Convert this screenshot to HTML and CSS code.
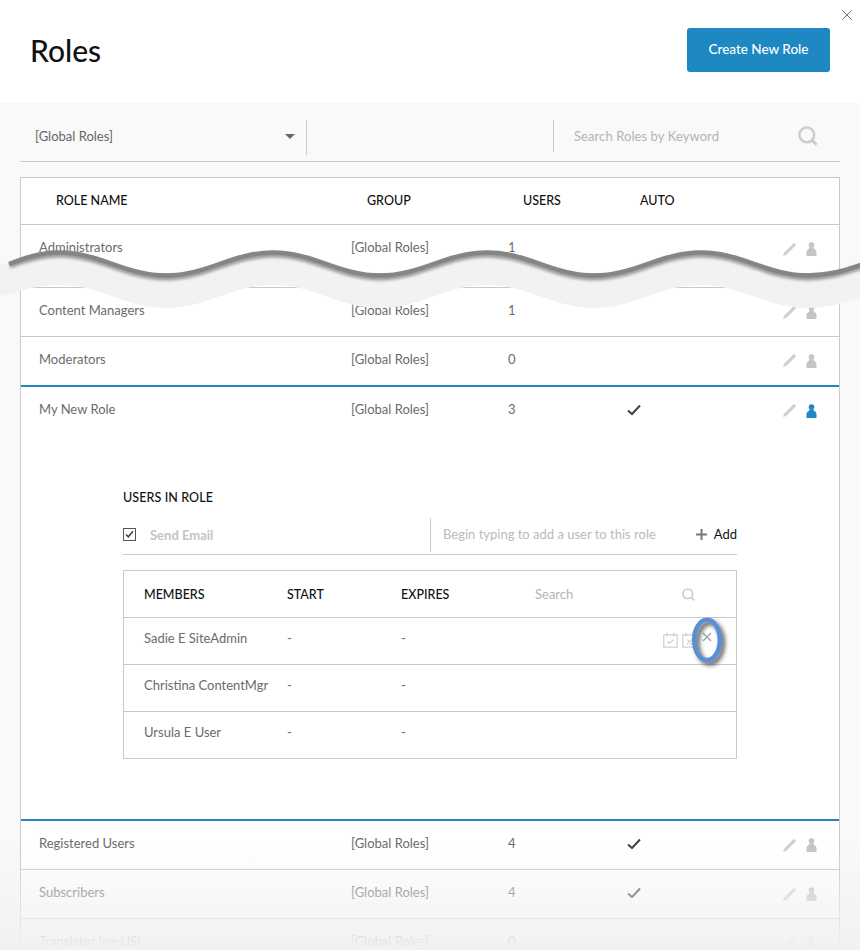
FILE: index.html
```html
<!DOCTYPE html>
<html lang="en">
<head>
<meta charset="utf-8">
<title>Roles</title>
<link rel="stylesheet" href="styles.css">
</head>
<body>
<svg class="defs" width="0" height="0" aria-hidden="true">
  <symbol id="i-pencil" viewBox="0 0 15 15"><path d="M12 .8 14.2 3 4.2 13 1 14.1 2 10.8Z"/></symbol>
  <symbol id="i-person" viewBox="0 0 11 14"><circle cx="5.5" cy="3" r="2.8"/><path d="M3.6 5.2h3.8c.5 1.4 1.2 2 2.3 2.9.6.6.8 1.2.8 2V14H.5v-3.9c0-.8.2-1.4.8-2 1.1-.9 1.8-1.5 2.3-2.9Z"/></symbol>
  <symbol id="i-check" viewBox="0 0 14 12"><path d="M1 6.5 5 10 13 1.5" fill="none" stroke="currentColor" stroke-width="2"/></symbol>
  <symbol id="i-search" viewBox="0 0 20 20"><circle cx="8.8" cy="8.8" r="7.4" fill="none" stroke="currentColor" stroke-width="2.4"/><path d="M13.8 14 18.6 18.8" fill="none" stroke="currentColor" stroke-width="3"/></symbol>
</svg>

<header class="top">
  <h1 class="title">Roles</h1>
  <button class="primary">Create New Role</button>
  <svg class="close" viewBox="0 0 11 11"><path d="M.5.5l10 10M10.5.5l-10 10"/></svg>
</header>

<main class="content">
  <div class="toolbar">
    <div class="select"><span>[Global Roles]</span><i class="caret"></i></div>
    <div class="toolbar-mid"></div>
    <div class="keyword"><span>Search Roles by Keyword</span><svg class="search-lg"><use href="#i-search"/></svg></div>
  </div>

  <section class="table">
    <div class="thead"><span>ROLE NAME</span><span>GROUP</span><span>USERS</span><span>AUTO</span></div>

    <div class="row"><span>Administrators</span><span>[Global Roles]</span><span>1</span><span></span>
      <span class="acts"><svg class="pencil"><use href="#i-pencil"/></svg><svg class="person"><use href="#i-person"/></svg></span></div>
    <div class="cut"></div>
    <div class="row"><span>Content Managers</span><span>[Global Roles]</span><span>1</span><span></span>
      <span class="acts"><svg class="pencil"><use href="#i-pencil"/></svg><svg class="person"><use href="#i-person"/></svg></span></div>
    <div class="row row-flush"><span>Moderators</span><span>[Global Roles]</span><span>0</span><span></span>
      <span class="acts"><svg class="pencil"><use href="#i-pencil"/></svg><svg class="person"><use href="#i-person"/></svg></span></div>

    <div class="open">
      <div class="row row-flush"><span>My New Role</span><span>[Global Roles]</span><span>3</span><span><svg class="check"><use href="#i-check"/></svg></span>
        <span class="acts"><svg class="pencil"><use href="#i-pencil"/></svg><svg class="person active"><use href="#i-person"/></svg></span></div>
      <div class="panel">
        <h2 class="panel-title">USERS IN ROLE</h2>
        <div class="addbar">
          <span class="checkbox"><svg viewBox="0 0 14 12"><path d="M2.5 6 5.5 9 11.5 2" fill="none" stroke="#444" stroke-width="2"/></svg></span>
          <span class="send">Send Email</span>
          <span class="typeahead">Begin typing to add a user to this role</span>
          <span class="add"><svg viewBox="0 0 11 11"><path d="M5.5 0v11M0 5.5h11"/></svg>Add</span>
        </div>
        <div class="members">
          <div class="mhead"><span>MEMBERS</span><span>START</span><span>EXPIRES</span><span class="msearch">Search</span><svg class="search-sm"><use href="#i-search"/></svg></div>
          <div class="mrow"><span>Sadie E SiteAdmin</span><span>-</span><span>-</span>
            <span class="macts">
              <svg class="cal" viewBox="0 0 15 16"><path d="M.8 2.8h13.4v12.4H.8zM4 .5v4M11 .5v4M4.5 9.5l2 2 4-4"/></svg>
              <svg class="cal" viewBox="0 0 15 16"><path d="M.8 2.8h13.4v12.4H.8zM4 .5v4M11 .5v4M5 7.5l5 5M10 7.5l-5 5"/></svg>
              <svg class="del" viewBox="0 0 10 10"><path d="M1 1l8 8M9 1l-8 8"/></svg>
            </span></div>
          <div class="mrow"><span>Christina ContentMgr</span><span>-</span><span>-</span></div>
          <div class="mrow"><span>Ursula E User</span><span>-</span><span>-</span></div>
        </div>
      </div>
    </div>

    <div class="row"><span>Registered Users</span><span>[Global Roles]</span><span>4</span><span><svg class="check"><use href="#i-check"/></svg></span>
      <span class="acts"><svg class="pencil"><use href="#i-pencil"/></svg><svg class="person"><use href="#i-person"/></svg></span></div>
    <div class="row"><span>Subscribers</span><span>[Global Roles]</span><span>4</span><span><svg class="check"><use href="#i-check"/></svg></span>
      <span class="acts"><svg class="pencil"><use href="#i-pencil"/></svg><svg class="person"><use href="#i-person"/></svg></span></div>
    <div class="row"><span>Translator (en-US)</span><span>[Global Roles]</span><span>0</span><span></span>
      <span class="acts"><svg class="pencil"><use href="#i-pencil"/></svg><svg class="person"><use href="#i-person"/></svg></span></div>
  </section>
</main>

<svg class="tear" viewBox="0 0 860 90">
  <defs><filter id="soft" x="-2%" y="-30%" width="104%" height="160%"><feGaussianBlur stdDeviation="1.4"/></filter></defs>
  <path class="tear-band" d="M0 24 L8 24 C25 18 40 13 59 13 C100 13 125 36 166 36 C207 36 232 13 273 13 C314 13 339 36 380 36 C421 36 446 13 487 13 C528 13 553 36 594 36 C635 36 660 13 701 13 C742 13 767 36 808 36 C830 36 845 30 860 25 L860 57 C845 62 830 68 808 68 C767 68 742 45 701 45 C660 45 635 68 594 68 C553 68 528 45 487 45 C446 45 421 68 380 68 C339 68 314 45 273 45 C232 45 207 68 166 68 C125 68 100 45 59 45 C35 45 18 52 0 56 Z"/>
  <path class="tear-glow" filter="url(#soft)" d="M10 26 C25 20 40 15 59 15 C100 15 125 38 166 38 C207 38 232 15 273 15 C314 15 339 38 380 38 C421 38 446 15 487 15 C528 15 553 38 594 38 C635 38 660 15 701 15 C742 15 767 38 808 38 C830 38 845 32 862 27"/>
  <path class="tear-edge" d="M9 24 C25 18 40 12.5 59 12.5 C100 12.5 125 35.5 166 35.5 C207 35.5 232 12.5 273 12.5 C314 12.5 339 35.5 380 35.5 C421 35.5 446 12.5 487 12.5 C528 12.5 553 35.5 594 35.5 C635 35.5 660 12.5 701 12.5 C742 12.5 767 35.5 808 35.5 C830 35.5 845 30 862 24.5"/>
</svg>

<svg class="ring" viewBox="0 0 50 64">
  <defs><filter id="ringshadow" x="-40%" y="-30%" width="180%" height="160%"><feDropShadow dx="3" dy="3" stdDeviation="2.2" flood-color="#333" flood-opacity=".8"/></filter></defs>
  <ellipse cx="22" cy="26" rx="12.8" ry="20.2" fill="none" stroke="#5a8fd6" stroke-width="4.5" filter="url(#ringshadow)"/>
</svg>

<div class="fade"></div>
</body>
</html>
```

FILE: styles.css
```css
* { box-sizing: border-box; }
html, body { margin: 0; padding: 0; }
body {
  position: relative;
  width: 860px;
  height: 950px;
  overflow: hidden;
  background: #f9f9f9;
  font-family: Lato, "Open Sans", sans-serif;
  font-size: 13px;
  color: #6b6b6b;
}
.defs { position: absolute; }

/* Header */
.top {
  position: relative;
  height: 103px;
  background: #fff;
  display: flex;
  align-items: center;
  justify-content: space-between;
  padding: 0 30px 3px;
}
.title { margin: 0; font-size: 30px; font-weight: 500; color: #111; }
.primary {
  width: 143px;
  height: 44px;
  border: 0;
  border-radius: 3px;
  background: #1e88c3;
  color: #fff;
  font: 500 13.5px Lato, sans-serif;
  padding: 0 0 2px;
}
.close {
  position: absolute;
  top: 10px;
  right: 8px;
  width: 10px;
  height: 10px;
  fill: none;
  stroke: #666;
  stroke-width: 1;
}

/* Toolbar */
.content { padding: 0 20px; }
.toolbar {
  display: flex;
  height: 59px;
  padding-top: 17px;
  border-bottom: 1px solid #c9c9c9;
}
.select {
  width: 287px;
  height: 35px;
  padding: 0 11px 3px 15px;
  border-right: 1px solid #c9c9c9;
  display: flex;
  align-items: center;
  justify-content: space-between;
  color: #666;
}
.caret { border: 5px solid transparent; border-top: 5px solid #666; border-bottom: 0; }
.toolbar-mid { width: 246px; }
.keyword {
  flex: 1;
  height: 32px;
  padding: 0 22px 0 20px;
  border-left: 1px solid #c9c9c9;
  display: flex;
  align-items: center;
  justify-content: space-between;
  color: #b4b4b4;
}
.keyword span { margin-top: -1px; letter-spacing: .08px; }
.search-lg { width: 20px; height: 20px; color: #cbcbcb; }

/* Table */
.table {
  margin-top: 15px;
  background: #fff;
  border: 1px solid #c9c9c9;
  border-bottom: 0;
}
.thead, .row {
  display: grid;
  grid-template-columns: 312px 157px 119px 1fr auto;
  align-items: center;
}
.thead {
  grid-template-columns: 311px 156px 117px 1fr;
  height: 47px;
  padding-left: 35px;
  padding-bottom: 1px;
  border-bottom: 1px solid #c9c9c9;
  color: #111;
  font-size: 12.5px;
  font-weight: 500;
}
.row {
  height: 49px;
  padding: 0 22px 4px 18px;
  border-bottom: 1px solid #c9c9c9;
  color: #6b6b6b;
}
.row-flush { height: 48px; border-bottom: 0; padding-bottom: 5px; }
.cut { height: 14px; border-bottom: 1px solid #c9c9c9; }
.acts { display: flex; align-items: center; gap: 9px; margin-top: 4px; }
.pencil { width: 15px; height: 15px; fill: #d0d0d0; }
.person { width: 11px; height: 14px; fill: #c4c4c4; }
.person.active { fill: #1e88c3; }
.check { display: block; width: 14px; height: 12px; color: #444; margin-top: 2px; }

/* Expanded role */
.open { border-top: 2px solid #1e88c3; border-bottom: 2px solid #1e88c3; }
.open .row { height: 47px; padding-bottom: 4px; }
.panel { padding: 54px 102px 60px; }
.panel-title { margin: 0; font-size: 12.5px; line-height: 20px; font-weight: 500; color: #111; letter-spacing: .1px; }
.addbar {
  height: 38px;
  margin-top: 9px;
  display: flex;
  align-items: center;
  border-bottom: 1px solid #c9c9c9;
}
.checkbox {
  width: 13px;
  height: 13px;
  margin-top: -3px;
  border: 1px solid #555;
  display: flex;
}
.checkbox svg { width: 11px; height: 11px; }
.send { width: 280px; margin: 0 0 1px 14px; font-weight: 700; color: #c4c4c4; }
.typeahead {
  flex: 1;
  height: 34px;
  line-height: 32px;
  margin-top: -2px;
  padding-left: 12px;
  border-left: 1px solid #c9c9c9;
  color: #bbb;
}
.add { display: flex; align-items: center; gap: 7px; color: #111; margin-top: -3px; }
.add svg { width: 11px; height: 11px; fill: none; stroke: #777; stroke-width: 2; }

.members { margin-top: 15px; border: 1px solid #c9c9c9; border-bottom: 0; }
.mhead, .mrow {
  display: grid;
  grid-template-columns: 143px 114px 134px 1fr auto;
  align-items: center;
  height: 47px;
  padding-left: 20px;
  border-bottom: 1px solid #c9c9c9;
}
.mhead { color: #111; font-size: 12.5px; font-weight: 500; padding-right: 41px; }
.mrow { padding-right: 24px; padding-bottom: 6px; }
.msearch { color: #b4b4b4; font-size: 13px; font-weight: 400; }
.search-sm { width: 13px; height: 13px; color: #cbcbcb; }
.macts {
  grid-column: 5;
  display: flex;
  align-items: center;
  gap: 4px;
  margin-top: 4px;
}
.cal { width: 15px; height: 16px; fill: none; stroke: #d0d0d0; stroke-width: 1.2; }
.del { width: 10px; height: 10px; margin: -6px 0 0 1px; fill: none; stroke: #a8a8a8; stroke-width: 1.6; }

/* Overlays */
.tear {
  position: absolute;
  left: 0;
  top: 240px;
  width: 860px;
  height: 90px;
  pointer-events: none;
}
.tear-band { fill: #f2f2f2; }
.tear-glow { fill: none; stroke: #9a9a9a; stroke-width: 5; }
.tear-edge { fill: none; stroke: #858585; stroke-width: 4.5; }
.ring {
  position: absolute;
  left: 685px;
  top: 614px;
  width: 50px;
  height: 64px;
  pointer-events: none;
}
.fade {
  position: absolute;
  left: 0;
  right: 0;
  top: 845px;
  bottom: 0;
  background: linear-gradient(rgba(241,241,241,0), #f1f1f1);
  pointer-events: none;
}
```
